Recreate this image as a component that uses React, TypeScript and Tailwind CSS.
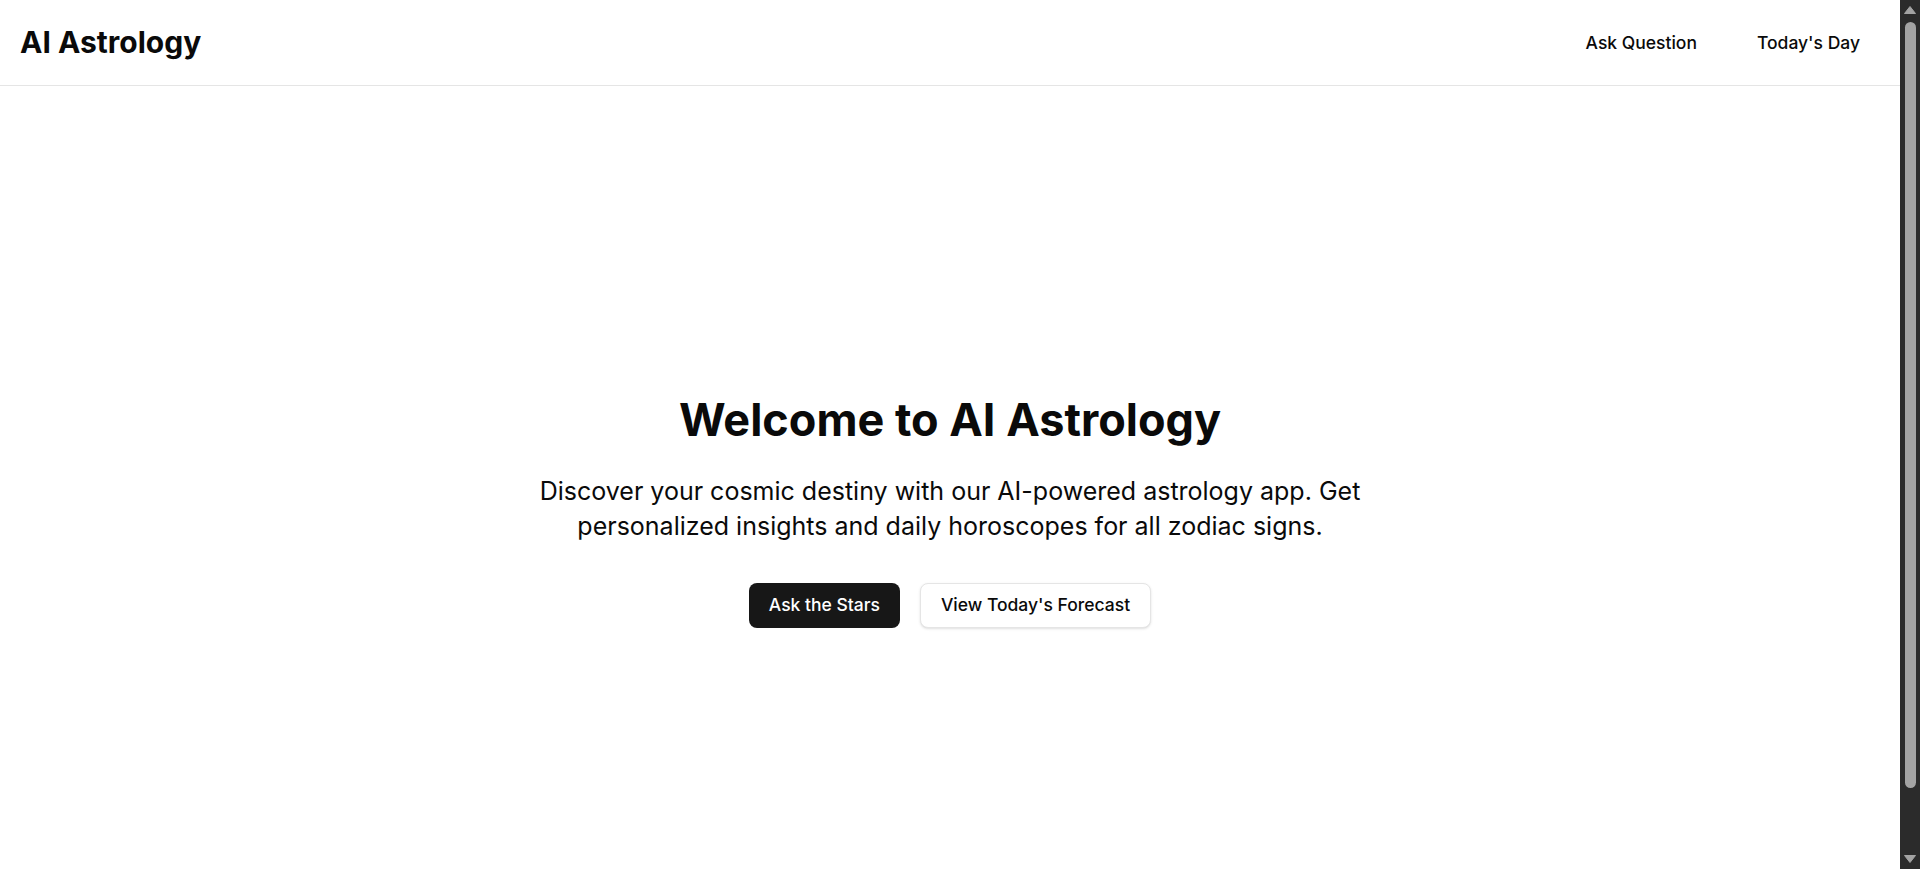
function Scrollbar() {
  return (
    <div className="w-5 h-screen shrink-0 bg-[#2b2b2b] flex flex-col items-center">
      <svg className="mt-[6px]" width="12" height="8" viewBox="0 0 12 8">
        <path d="M6 0.5 L11.5 7.5 L0.5 7.5 Z" fill="#a3a3a3" strokeLinejoin="round" stroke="#a3a3a3" />
      </svg>
      <div className="mt-2 w-[11px] h-[766px] rounded-full bg-[#a3a3a3]" />
      <div className="flex-1" />
      <svg className="mb-[6px]" width="12" height="8" viewBox="0 0 12 8">
        <path d="M0.5 0.5 L11.5 0.5 L6 7.5 Z" fill="#a3a3a3" strokeLinejoin="round" stroke="#a3a3a3" />
      </svg>
    </div>
  );
}

export default function App() {
  return (
    <div className="h-screen flex bg-white text-[#0a0a0a] font-['Inter',sans-serif]">
      <div className="flex-1 min-w-0 h-screen overflow-hidden">
        <header className="h-[86px] border-b border-[#e5e5e5] px-5 flex items-center justify-between">
          <h1 className="text-[30px] font-bold">AI Astrology</h1>
          <nav className="flex items-center gap-[60px] pr-5 pt-[2px] text-[17.5px] font-medium">
            <a href="#">Ask Question</a>
            <a href="#">Today's Day</a>
          </nav>
        </header>

        <main className="h-[852px] flex items-center justify-center">
          <div className="flex flex-col items-center text-center">
            <h2 className="text-[45px] leading-none font-bold">Welcome to AI Astrology</h2>
            <p className="mt-8 max-w-[860px] text-[25px] leading-[35px]">
              Discover your cosmic destiny with our AI-powered astrology app. Get personalized insights and daily horoscopes for all zodiac signs.
            </p>
            <div className="mt-[39px] flex gap-5">
              <button className="h-[45px] px-5 rounded-lg bg-[#171717] text-white text-[17.5px] font-medium">
                Ask the Stars
              </button>
              <button className="h-[45px] px-5 rounded-lg border border-[#e5e5e5] bg-white text-[17.5px] font-medium shadow-sm">
                View Today's Forecast
              </button>
            </div>
          </div>
        </main>
      </div>
      <Scrollbar />
    </div>
  );
}
